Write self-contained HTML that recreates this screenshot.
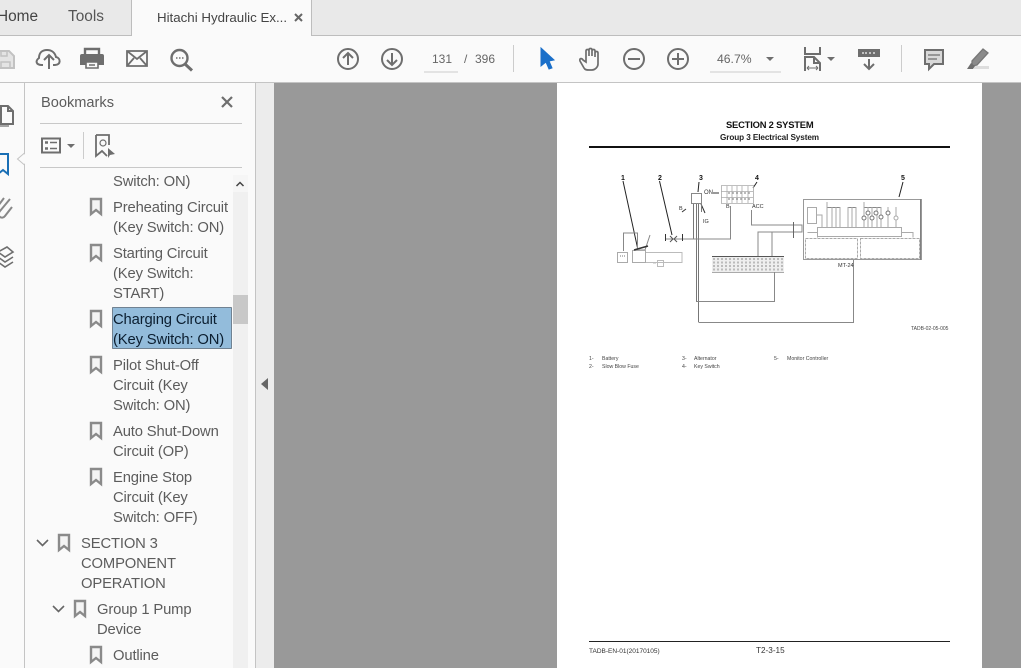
<!DOCTYPE html>
<html><head><meta charset="utf-8"><style>
html,body{margin:0;padding:0}
body{width:1021px;height:668px;overflow:hidden;position:relative;background:#999;font-family:"Liberation Sans",sans-serif}
div{position:absolute;box-sizing:border-box}
svg{position:absolute;left:0;top:0;overflow:visible}
.t{color:#5c5c5c;font-size:14.8px;letter-spacing:-.15px;line-height:20px;white-space:nowrap}
.p{color:#111;white-space:nowrap;line-height:1}
</style></head><body>
<div style="left:0;top:0;width:1021px;height:36px;background:#e9e9e9"></div>
<div style="left:0;top:35px;width:1021px;height:1px;background:#bdbdbd"></div>
<div style="left:131px;top:0;width:181px;height:37px;background:#fafafa;border-left:1px solid #bdbdbd;border-right:1px solid #bdbdbd"></div>
<div style="left:0;top:36px;width:1021px;height:46px;background:#fafafa"></div>
<div style="left:0;top:82px;width:1021px;height:1px;background:#c4c4c4"></div>
<div style="left:0;top:83px;width:24px;height:585px;background:#fafafa"></div>
<div style="left:24px;top:83px;width:1px;height:585px;background:#c4c4c4"></div>
<div style="left:25px;top:83px;width:230px;height:585px;background:#fafafa"></div>
<div style="left:255px;top:83px;width:19px;height:585px;background:#ececec;border-left:1px solid #c4c4c4"></div>
<div style="left:274px;top:83px;width:747px;height:585px;background:#999"></div>
<div style="left:557px;top:83px;width:425px;height:585px;background:#fff"></div>

<div class="t" style="left:-3px;top:7px;font-size:15.4px;letter-spacing:0;color:#444">Home</div>
<div class="t" style="left:68px;top:7px;font-size:15.4px;letter-spacing:0;color:#555">Tools</div>
<div class="t" style="left:157px;top:8px;font-size:13.3px;letter-spacing:0;color:#444">Hitachi Hydraulic Ex...</div>

<div class="t" style="left:432px;top:49px;font-size:12px;letter-spacing:0;color:#666">131</div>
<div class="t" style="left:464px;top:49px;font-size:12px;letter-spacing:0;color:#666">/</div>
<div class="t" style="left:475px;top:49px;font-size:12px;letter-spacing:0;color:#666">396</div>
<div class="t" style="left:717px;top:49px;font-size:12.2px;letter-spacing:0;color:#666">46.7%</div>
<div class="t" style="left:41px;top:93px;font-size:14.6px;letter-spacing:0;color:#5c5c5c">Bookmarks</div>

<svg width="1021" height="668" fill="none" stroke="#6e6e6e" stroke-width="2">
<!-- tab close -->
<path d="M295 14l7 7M302 14l-7 7" stroke="#666" stroke-width="2"/>
<!-- toolbar left -->
<path d="M-3 51h12l5 5v12h-17z" fill="#e4e4e4" stroke="#c2c2c2" stroke-width="2"/><path d="M1 51v5h6v-5M1 68v-6h9v6" stroke="#c2c2c2" stroke-width="1.5"/>
<path d="M43 65h-1c-6 0-7-4-3-7 0-5 3-8 8-8 5 0 8 3 9 7 5 1 5 8-1 8h-2" stroke-width="2"/><path d="M49 69V56M44 60l5-5 5 5" stroke-width="2"/>
<path d="M85 55v-6h14v6" stroke-width="2.4"/><path d="M82 55h20a1 1 0 0 1 1 1v8h-4v-3H85v3h-4v-8a1 1 0 0 1 1-1z" fill="#6e6e6e"/><path d="M86 62h12v6H86zM89 65h6" stroke-width="1.6"/>
<path d="M127 51h20v15h-20zM127 51l10 8 10-8M127 66l7-8M147 66l-7-8" stroke-width="1.8"/>
<circle cx="179.500" cy="58" r="8" stroke-width="2.4"/><path d="M185 64l7 6.500" stroke-width="3"/><path d="M176 58h1.500M179 58h1.500M182 58h1.500" stroke-width="1.5"/>
<!-- nav -->
<circle cx="348" cy="59" r="10" stroke-width="2"/><path d="M348 65v-12M343 58l5-5 5 5" stroke-width="2"/>
<circle cx="392" cy="59" r="10" stroke-width="2"/><path d="M392 53v12M387 60l5 5 5-5" stroke-width="2"/>
<path d="M424 72h34" stroke="#ccc" stroke-width="1"/>
<path d="M513.500 45v27" stroke="#ccc" stroke-width="1"/>
<path d="M541 48l13 12-5 1 3 7-3 1-3-7-5 4z" fill="#1a6fc9" stroke="#1a6fc9" stroke-width="1"/>
<path d="M583 60c-1-2-4-2-3 1l4 7c1 2 3 2 5 2h3c3 0 6-3 6-6v-11c0-2-3-2-3 0v4-6c0-2-3-2-3 0v5-6c0-2-3-2-3 0v6-5c0-2-3-2-3 0v11z" stroke-width="1.7"/>
<circle cx="634" cy="59" r="10" stroke-width="2"/><path d="M628 59h12" stroke-width="2"/>
<circle cx="678" cy="59" r="10" stroke-width="2"/><path d="M672 59h12M678 53v12" stroke-width="2"/>
<path d="M710 72h71" stroke="#ccc" stroke-width="1"/>
<path d="M766 57h8l-4 4z" fill="#6e6e6e" stroke="none"/>
<path d="M805 47v7h15v-7" stroke-width="2"/><path d="M805 71v-14h9l6 6v8M814 57v6h6" stroke-width="2"/><path d="M807 68h11M807 68l2-2M807 68l2 2M818 68l-2-2M818 68l-2 2" stroke-width="1"/>
<path d="M827 57h8l-4 4z" fill="#6e6e6e" stroke="none"/>
<path d="M859 50h20v6h-20z" fill="#6e6e6e"/><path d="M862 53h2M865 53h2M869 53h2M873 53h2" stroke="#ddd" stroke-width="1.500"/><path d="M869 59v10M864 64l5 5 5-5" stroke-width="2"/>
<path d="M901.500 45v27" stroke="#ccc" stroke-width="1"/>
<path d="M925 50h18v14h-9l-5 5v-5h-4z" fill="#d8d8d8" stroke-width="2"/><path d="M928 55h12M928 59h9" stroke-width="1.300"/>
<path d="M974 66h15v3h-15z" fill="#ddd" stroke="none"/>
<path d="M972 61l11-12 5 4-11 12-5 1z" fill="#8a8a8a" stroke="#777" stroke-width="1.300"/><path d="M967 69l4-6 4 3-2 3z" fill="#6e6e6e" stroke="none"/>
<!-- rail -->
<path d="M1 106h7l5 5v13H1zM8 106v5h5" stroke-width="2"/><path d="M-1 110v16h10" stroke-width="1.800" opacity=".7"/>
<path d="M-2 154h10v20l-5-4-5 4z" stroke="#1a6fb5" stroke-width="2"/>
<path d="M10 199l-10 12c-4 5 2 9 5 5l7-9M4 198l-6 8" stroke="#888" stroke-width="2"/>
<path d="M7 247l6 5-8 5-7-5zM-2 257l7 5 8-5M-2 262l7 5 8-5" stroke-width="1.600"/>
<path d="M17 159l8-5 0 10z" fill="#fafafa" stroke="none"/><path d="M24.500 153l-7 6 7 6" stroke="#c4c4c4" stroke-width="1"/>
<!-- bookmarks header -->
<path d="M40 123.500h202M40 167.500h202" stroke="#c8c8c8" stroke-width="1"/>
<path d="M222 97l10 10M232 97l-10 10" stroke-width="2.200"/>
<path d="M42 138.500h18v14H42z" stroke-width="2"/><path d="M45 142.500h3M45 148.500h3" stroke-width="2.500"/><path d="M50 142.500h7M50 148.500h7" stroke-width="1.500"/>
<path d="M67 144h8l-4 4z" fill="#6e6e6e" stroke="none"/>
<path d="M83.500 132v27" stroke="#ccc" stroke-width="1"/>
<path d="M96 135h13v10M96 135v21l6-5 5 5" stroke-width="1.800"/><circle cx="103" cy="143" r="3" stroke-width="1.200"/><path d="M108 148l7 6-5 1-2 3z" fill="#6e6e6e" stroke="none"/>
<!-- scroll -->
<rect x="233" y="175" width="15" height="493" fill="#f0f0f0" stroke="none"/>
<rect x="233" y="175" width="15" height="17" fill="#f6f6f6" stroke="none"/>
<rect x="233" y="295" width="15" height="29" fill="#c8c8c8" stroke="none"/>
<path d="M236.500 186l3.500-3.500 3.500 3.500" stroke="#444" stroke-width="1.500"/>
<path d="M261 384l7-6v12z" fill="#666" stroke="none"/>
<!-- selection -->
<rect x="112.500" y="307.500" width="119" height="41" fill="#93bcdb" stroke="#1a2a3a" stroke-width="1" stroke-dasharray="1 1"/>
<!-- bookmark icons -->
<g fill="#f4f4f4" stroke="#8a8a8a" stroke-width="2.400">
<path d="M91 199h10v15l-5-4-5 4z"/>
<path d="M91 245h10v15l-5-4-5 4z"/>
<path d="M91 311h10v15l-5-4-5 4z"/>
<path d="M91 357h10v15l-5-4-5 4z"/>
<path d="M91 423h10v15l-5-4-5 4z"/>
<path d="M91 469h10v15l-5-4-5 4z"/>
<path d="M59 535h10v15l-5-4-5 4z"/>
<path d="M75 601h10v15l-5-4-5 4z"/>
<path d="M91 647h10v15l-5-4-5 4z"/>
</g>
<path d="M37 540l5.500 5.500 5.500-5.500M53 606l5.500 5.500 5.500-5.500" stroke="#666" stroke-width="1.600"/>
</svg>

<div class="t" style="left:113px;top:172px">Switch: ON)</div>
<div class="t" style="left:113px;top:198px">Preheating Circuit</div>
<div class="t" style="left:113px;top:218px">(Key Switch: ON)</div>
<div class="t" style="left:113px;top:244px">Starting Circuit</div>
<div class="t" style="left:113px;top:264px">(Key Switch:</div>
<div class="t" style="left:113px;top:284px">START)</div>
<div class="t" style="left:113px;top:310px;color:#0b1e30">Charging Circuit</div>
<div class="t" style="left:113px;top:330px;color:#0b1e30">(Key Switch: ON)</div>
<div class="t" style="left:113px;top:356px">Pilot Shut-Off</div>
<div class="t" style="left:113px;top:376px">Circuit (Key</div>
<div class="t" style="left:113px;top:396px">Switch: ON)</div>
<div class="t" style="left:113px;top:422px">Auto Shut-Down</div>
<div class="t" style="left:113px;top:442px">Circuit (OP)</div>
<div class="t" style="left:113px;top:468px">Engine Stop</div>
<div class="t" style="left:113px;top:488px">Circuit (Key</div>
<div class="t" style="left:113px;top:508px">Switch: OFF)</div>
<div class="t" style="left:81px;top:534px">SECTION 3</div>
<div class="t" style="left:81px;top:554px">COMPONENT</div>
<div class="t" style="left:81px;top:574px">OPERATION</div>
<div class="t" style="left:97px;top:600px">Group 1 Pump</div>
<div class="t" style="left:97px;top:620px">Device</div>
<div class="t" style="left:113px;top:646px">Outline</div>

<!-- PDF page -->
<div class="p" style="left:726px;top:120px;font-size:9.4px;font-weight:bold;letter-spacing:-.2px">SECTION 2 SYSTEM</div>
<div class="p" style="left:720px;top:134px;font-size:8.200px;font-weight:bold;letter-spacing:-.1px;color:#222">Group 3 Electrical System</div>
<div style="left:589px;top:146px;width:361px;height:2px;background:#111"></div>
<svg width="1021" height="668" fill="none" stroke="#777" stroke-width="1">
<!-- leaders -->
<path d="M623 181l15 69M659.500 181l12.500 54M699 182l-1 10M757 182l-4 6M903 182l-4 15" stroke="#222" stroke-width="1"/>
<path d="M686 209l-4 3M701 204l4 9M713 193h6" stroke="#333"/>
<!-- switch -->
<path d="M691.500 193.500h10v10h-10z" stroke="#888"/>
<path d="M693.500 204v35M696.500 204v98M698.500 204v118M701.500 204v8" stroke="#777"/>
<!-- key switch grid -->
<path d="M721.500 185.500h32v18h-32z" stroke="#aaa" stroke-width=".8"/>
<path d="M727 186v17M732 186v17M737 186v17M742 186v17M748 186v17M721 191.500h32M721 197.500h32" stroke="#aaa" stroke-width=".8"/>
<path d="M728 193h24M728 199h24" stroke="#777" stroke-dasharray="2 2"/>
<!-- wires -->
<path d="M730.500 206v33H665M751.500 210v15h50.500v7h-44v24" stroke="#888"/>
<!-- fuse block -->
<path d="M665.500 234v7M682.500 234v7" stroke="#333"/><path d="M670 236l3 3-3 3M677 236l-3 3 3 3" stroke="#555"/>
<path d="M623.500 251v-18h14v17M650 235l-5 15h-6" stroke="#888"/>
<path d="M617.500 252.500h10v10h-10zM632.500 250.500h13v12h-13z" stroke="#aaa"/>
<path d="M620 256h5" stroke="#777" stroke-dasharray="1 1"/>
<path d="M634 250l14-4" stroke="#333" stroke-width="1.500"/>
<path d="M646 252.500h36v10h-36M653 263h3M657.500 260.500h6v6h-6z" stroke="#bbb"/>
<!-- center connector -->
<rect x="712" y="256" width="72" height="17" fill="#eee" stroke="none"/>
<path d="M712 256.500h72" stroke="#555"/><path d="M712 272.500h72" stroke="#aaa"/>
<path d="M714 258v14M718 258v14M722 258v14M726 258v14M730 258v14M734 258v14M738 258v14M742 258v14M746 258v14M750 258v14M754 258v14M758 258v14M762 258v14M766 258v14M770 258v14M774 258v14M778 258v14M782 258v14" stroke="#888" stroke-dasharray="2 1.500"/>
<path d="M696.500 301.500h78V272M698.500 322.500h155V260" stroke="#888"/>
<path d="M772 232v24" stroke="#888"/>
<path d="M793.500 222v16" stroke="#666"/>
<!-- monitor -->
<path d="M803.500 199.500h117v60h-117z" stroke="#999"/><path d="M921 199v61" stroke="#777" stroke-width="1.500"/>
<path d="M807.500 207.500h9v16h-9zM816 215h6v12" stroke="#aaa"/>
<path d="M817.500 227.500h84v9h-84zM807.500 232.500h10v5M901 232.500h12v5" stroke="#aaa"/>
<path d="M805.500 238.500h52v20h-52zM860.500 238.500h59v20h-59z" stroke="#aaa" stroke-dasharray="3 1"/>
<path d="M827 207.500h13M848 207.500h8M864 207.500h17" stroke="#888"/>
<path d="M827 202v25M832 207v20M836 207v20M840 207v20M848 207v20M852 207v20M856 207v20M864 202v25M868 207v20M872 207v20M877 207v20M881 207v20M888 207v20M896 207v20" stroke="#aaa"/>
<g fill="#fff" stroke="#777"><circle cx="868" cy="213" r="2"/><circle cx="876" cy="213" r="2"/><circle cx="864" cy="218" r="2"/><circle cx="872" cy="218" r="2"/><circle cx="881" cy="217" r="2"/><circle cx="888" cy="213" r="2"/><circle cx="896" cy="218" r="2" stroke="#aaa"/></g>
</svg>
<div class="p" style="left:621px;top:175px;font-size:7px;font-weight:bold">1</div>
<div class="p" style="left:658px;top:175px;font-size:7px;font-weight:bold">2</div>
<div class="p" style="left:699px;top:175px;font-size:7px;font-weight:bold">3</div>
<div class="p" style="left:755px;top:175px;font-size:7px;font-weight:bold">4</div>
<div class="p" style="left:901px;top:175px;font-size:7px;font-weight:bold">5</div>
<div class="p" style="left:704px;top:190px;font-size:6px;color:#333">ON</div>
<div class="p" style="left:679px;top:207px;font-size:5.500px;color:#333">B</div>
<div class="p" style="left:703px;top:220px;font-size:5.500px;color:#333">IG</div>
<div class="p" style="left:726px;top:205px;font-size:5.500px;color:#333">B</div>
<div class="p" style="left:752px;top:205px;font-size:5.500px;color:#333">ACC</div>
<div class="p" style="left:838px;top:264px;font-size:5.500px;color:#333">MT-24</div>
<div class="p" style="left:911px;top:327px;font-size:5px;color:#444">TADB-02-05-005</div>
<div class="p" style="left:589px;top:357px;font-size:5.200px;color:#444">1-</div>
<div class="p" style="left:602px;top:357px;font-size:5.200px;color:#444">Battery</div>
<div class="p" style="left:589px;top:365px;font-size:5.200px;color:#444">2-</div>
<div class="p" style="left:602px;top:365px;font-size:5.200px;color:#444">Slow Blow Fuse</div>
<div class="p" style="left:682px;top:357px;font-size:5.200px;color:#444">3-</div>
<div class="p" style="left:694px;top:357px;font-size:5.200px;color:#444">Alternator</div>
<div class="p" style="left:682px;top:365px;font-size:5.200px;color:#444">4-</div>
<div class="p" style="left:694px;top:365px;font-size:5.200px;color:#444">Key Switch</div>
<div class="p" style="left:774px;top:357px;font-size:5.200px;color:#444">5-</div>
<div class="p" style="left:787px;top:357px;font-size:5.200px;color:#444">Monitor Controller</div>
<div style="left:589px;top:641px;width:361px;height:1px;background:#222"></div>
<div class="p" style="left:589px;top:649px;font-size:6.500px;color:#333">TADB-EN-01(20170105)</div>
<div class="p" style="left:756px;top:647px;font-size:8.200px;color:#333">T2-3-15</div>
</body></html>
